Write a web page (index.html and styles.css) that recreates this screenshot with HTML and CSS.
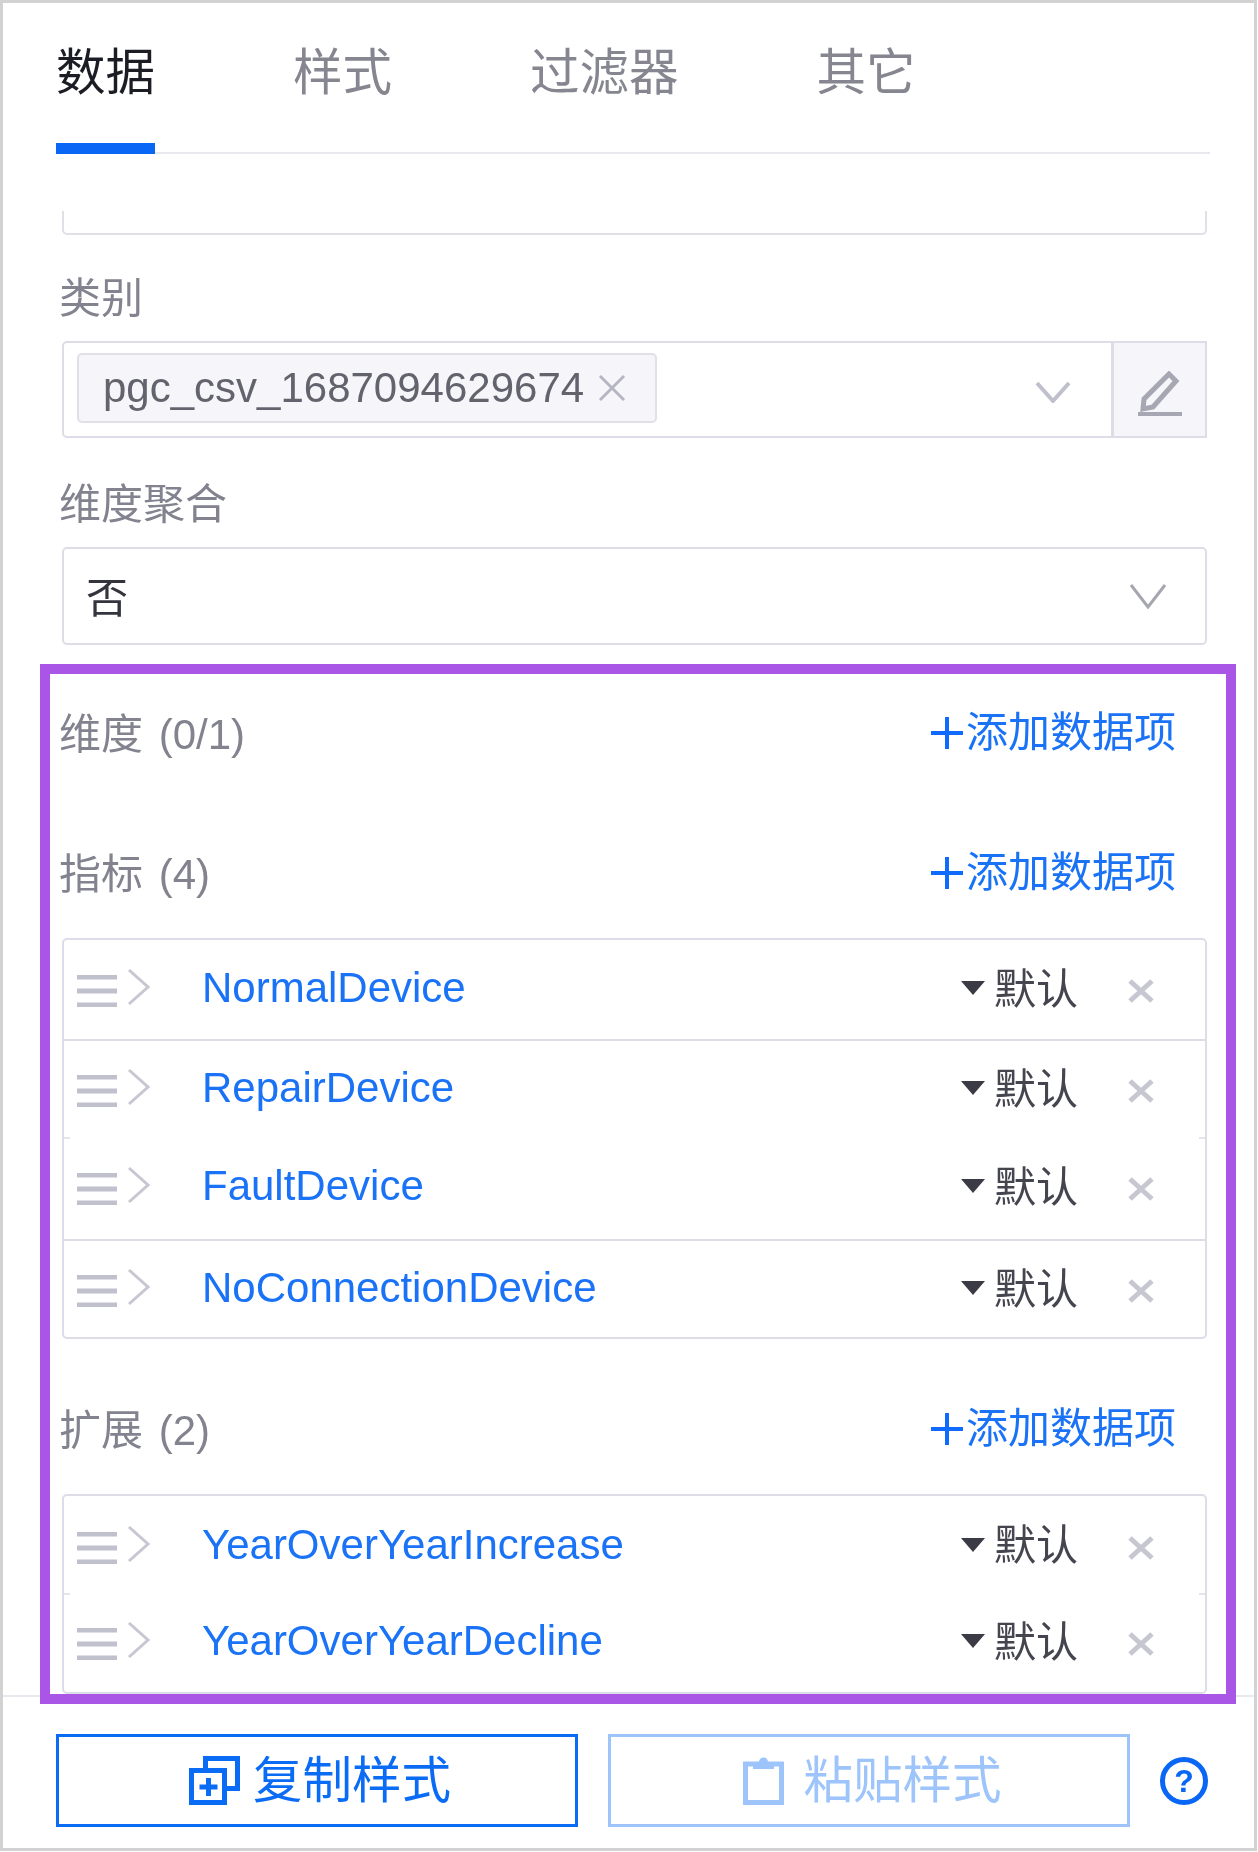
FILE: index.html
```html
<!DOCTYPE html>
<html lang="zh-CN">
<head>
<meta charset="utf-8">
<title>数据</title>
<link rel="stylesheet" href="styles.css">
</head>
<body>
<svg class="defs" aria-hidden="true">
  <symbol id="grip" viewBox="0 0 40 32"><path d="M0 2h40M0 16h40M0 30h40"/></symbol>
  <symbol id="right" viewBox="0 0 24 38"><path d="M2 2l19 17L2 36"/></symbol>
  <symbol id="x" viewBox="0 0 28 24"><path d="M3 2l22 20M25 2L3 22"/></symbol>
  <symbol id="plus" viewBox="0 0 32 34"><path d="M0 17h32M16 1v32"/></symbol>
</svg>
<main class="panel">
  <nav class="tabs">
    <span class="tab tab--active">数据</span>
    <span class="tab">样式</span>
    <span class="tab">过滤器</span>
    <span class="tab">其它</span>
  </nav>
  <div class="content">
    <div class="stub"></div>
    <div class="label label--first">类别</div>
    <div class="field-group">
      <div class="select select--tags">
        <span class="tag">pgc_csv_1687094629674<svg class="tag-x" viewBox="0 0 28 28"><path d="M2 2l24 24M26 2L2 26"/></svg></span>
        <svg class="chev chev--muted" viewBox="0 0 36 22"><path d="M2 2l16 18L34 2"/></svg>
      </div>
      <div class="addon">
        <svg class="pencil" viewBox="0 0 44 46"><path class="pencil-body" d="M31 3l7 7-23 26-10 2 1-10z"/><rect class="pencil-line" x="0" y="41" width="44" height="4"/></svg>
      </div>
    </div>
    <div class="label">维度聚合</div>
    <div class="select select--plain">
      <span class="value">否</span>
      <svg class="chev chev--big" viewBox="0 0 38 26"><path d="M2 2l17 22L36 2"/></svg>
    </div>

    <section class="fields">
      <div class="head head--dim">
        <span class="label-inline">维度 (0/1)</span>
        <a class="add"><svg class="add-plus"><use href="#plus"/></svg>添加数据项</a>
      </div>
      <div class="head">
        <span class="label-inline">指标 (4)</span>
        <a class="add"><svg class="add-plus"><use href="#plus"/></svg>添加数据项</a>
      </div>
      <div class="list">
        <div class="row row--first">
          <svg class="grip"><use href="#grip"/></svg><svg class="right"><use href="#right"/></svg>
          <span class="name">NormalDevice</span>
          <span class="caret"></span><span class="agg">默认</span><svg class="del"><use href="#x"/></svg>
        </div>
        <div class="row row--line">
          <svg class="grip"><use href="#grip"/></svg><svg class="right"><use href="#right"/></svg>
          <span class="name">RepairDevice</span>
          <span class="caret"></span><span class="agg">默认</span><svg class="del"><use href="#x"/></svg>
        </div>
        <div class="row row--seam row--tall">
          <svg class="grip"><use href="#grip"/></svg><svg class="right"><use href="#right"/></svg>
          <span class="name">FaultDevice</span>
          <span class="caret"></span><span class="agg">默认</span><svg class="del"><use href="#x"/></svg>
        </div>
        <div class="row row--line">
          <svg class="grip"><use href="#grip"/></svg><svg class="right"><use href="#right"/></svg>
          <span class="name">NoConnectionDevice</span>
          <span class="caret"></span><span class="agg">默认</span><svg class="del"><use href="#x"/></svg>
        </div>
      </div>
      <div class="head head--ext">
        <span class="label-inline">扩展 (2)</span>
        <a class="add"><svg class="add-plus"><use href="#plus"/></svg>添加数据项</a>
      </div>
      <div class="list">
        <div class="row row--short">
          <svg class="grip"><use href="#grip"/></svg><svg class="right"><use href="#right"/></svg>
          <span class="name">YearOverYearIncrease</span>
          <span class="caret"></span><span class="agg">默认</span><svg class="del"><use href="#x"/></svg>
        </div>
        <div class="row row--seam row--first">
          <svg class="grip"><use href="#grip"/></svg><svg class="right"><use href="#right"/></svg>
          <span class="name">YearOverYearDecline</span>
          <span class="caret"></span><span class="agg">默认</span><svg class="del"><use href="#x"/></svg>
        </div>
      </div>
    </section>
  </div>
  <footer class="footer">
    <button class="btn btn--copy" type="button">
      <svg class="btn-icon" viewBox="0 0 52 49"><path d="M16.5 12V2.500h32v30H38"/><rect x="2.500" y="14.500" width="33" height="32"/><path d="M10.500 31h18M19.500 22v18"/></svg>
      复制样式
    </button>
    <button class="btn btn--paste" type="button">
      <svg class="btn-icon btn-icon--paste" viewBox="0 0 42 49"><rect x="2.500" y="8" width="36" height="38.500"/><path class="clip" d="M10 13V6h6a4.500 4.500 0 0 1 9 0h6v7z"/></svg>
      粘贴样式
    </button>
    <span class="help">?</span>
  </footer>
</main>
</body>
</html>
```
FILE: styles.css
```css
* { box-sizing: border-box; }
html, body { margin: 0; padding: 0; background: #fff; }
body {
  font-family: "Liberation Sans", "Noto Sans CJK SC", sans-serif;
  font-size: 42px;
  line-height: 42px;
  color: #3a3b44;
}
.defs { position: absolute; width: 0; height: 0; }
svg { display: block; flex: none; fill: none; }

/* the reference is a slightly soft, upscaled capture */
.tab, .label, .label-inline, .value, .tag, .chev, .pencil, .add, .row > *, .btn > *, .help {
  filter: blur(0.5px);
}

.panel {
  width: 1257px;
  height: 1851px;
  border: 3px solid #d2d2d2;
  display: flex;
  flex-direction: column;
}

.tabs {
  height: 151px;
  margin: 0 44px 0 53px;
  display: flex;
  gap: 138px;
  border-bottom: 2px solid #e8e9ee;
}
.tab {
  height: 151px;
  padding-top: 45px;
  font-size: 49.5px;
  line-height: 49px;
  white-space: nowrap;
  color: #85868f;
}
.tab--active {
  color: #1c1d24;
  border-bottom: 11px solid #0a66f5;
}

.content {
  flex: 1;
  min-height: 0;
  padding: 0 47px 0 56px;
}
.stub {
  height: 24px;
  margin: 57px 0 0 3px;
  border: 2px solid #dfe0e8;
  border-top: 0;
  border-radius: 0 0 5px 5px;
}
.label {
  margin-top: 46px;
  margin-bottom: 21px;
  color: #82838f;
}
.label--first { margin-top: 43px; margin-bottom: 21px; }

.field-group { display: flex; margin-left: 3px; height: 97px; }
.select {
  display: flex;
  align-items: center;
  justify-content: space-between;
  border: 2px solid #dcdde6;
  border-radius: 5px;
}
.select--tags { flex: 1; padding: 0 40px 0 13px; border-radius: 5px 0 0 5px; }
.select--plain { height: 98px; margin-left: 3px; padding: 0 38px 0 22px; }
.value { color: #33343c; padding-top: 5px; }

.tag {
  display: flex;
  align-items: center;
  height: 70px;
  margin-bottom: 3px;
  padding: 0 29px 0 24px;
  background: #f5f5fa;
  border: 2px solid #e0e1e8;
  border-radius: 5px;
  color: #62636d;
}
.tag-x { width: 28px; height: 28px; margin-left: 14px; stroke: #b5b6c1; stroke-width: 3; filter: none; }
.chev { stroke-width: 3; }
.chev--muted { width: 36px; height: 22px; margin-top: 5px; stroke: #bfc0cb; stroke-width: 4; }
.chev--big { width: 38px; height: 26px; stroke: #a5a6b0; }

.addon {
  width: 94px;
  display: flex;
  align-items: center;
  justify-content: center;
  padding-top: 8px;
  background: #f5f5fa;
  border: 2px solid #dcdde6;
  border-left-width: 1px;
}
.pencil { width: 44px; height: 46px; }
.pencil-body { stroke: #a6a7b2; stroke-width: 5; }
.pencil-line { fill: #a6a7b2; }

.fields {
  position: relative;
  z-index: 1;
  height: 1040px;
  margin: 19px -29px 0 -19px;
  padding: 40px 19px 0 9px;
  border: 10px solid #a955e6;
  background: #fff;
  overflow: hidden;
}
.head {
  display: flex;
  justify-content: space-between;
  align-items: flex-start;
  height: 42px;
  margin-bottom: 42px;
}
.head--dim { margin-bottom: 98px; }
.head--ext { margin-top: 71px; }
.label-inline { color: #82838f; word-spacing: 4px; }
.add {
  display: flex;
  align-items: center;
  gap: 3px;
  margin: -2px 31px 0 0;
  color: #1a73f7;
}
.add-plus { width: 32px; height: 34px; stroke: #0f6bff; stroke-width: 4; }

.list {
  margin-left: 3px;
  border: 2px solid #dcdde6;
  border-radius: 5px;
}
.row {
  display: flex;
  align-items: center;
  height: 98px;
  padding: 4px 50px 0 13px;
}
.row--first { height: 99px; padding-top: 3px; }
.row--short { height: 97px; padding-top: 6px; }
.row--tall { height: 102px; padding-top: 2px; }
.row--line { border-top: 2px solid #dcdde6; }
.row--seam {
  background: linear-gradient(to right, #e4e5ec 6px, transparent 6px, transparent calc(100% - 6px), #e4e5ec calc(100% - 6px)) top / 100% 2px no-repeat;
}
.grip { width: 40px; height: 32px; stroke: #c0c1cc; stroke-width: 5; }
.right { width: 24px; height: 38px; margin: 0 0 8px 10px; stroke: #c6c7d1; stroke-width: 3; }
.name {
  flex: 1;
  margin: 0 0 6px 51px;
  color: #1a73f7;
}
.caret {
  width: 0;
  height: 0;
  margin: 0 9px 6px 0;
  border-style: solid;
  border-width: 14px 12px 0;
  border-color: #3a3b44 transparent transparent;
}
.agg { width: 85px; margin-bottom: 3px; color: #44454f; }
.del { width: 28px; height: 24px; margin-left: 48px; stroke: #c6c7d1; stroke-width: 5; }

.footer {
  height: 153px;
  border-top: 2px solid #e8e9ee;
  display: flex;
  align-items: flex-start;
  padding: 37px 0 0 53px;
}
.btn {
  display: flex;
  align-items: center;
  justify-content: center;
  width: 522px;
  height: 93px;
  margin: 0;
  padding: 0 0 0 6px;
  background: #fff;
  border: 3px solid;
  font: 49.5px/49px "Liberation Sans", "Noto Sans CJK SC", sans-serif;
}
.btn--copy { color: #0a6cf5; border-color: #0a6cf5; gap: 12px; }
.btn--paste { margin-left: 30px; color: #9dc4fb; border-color: #9dc4fb; gap: 19px; }
.btn-icon { width: 52px; height: 49px; stroke: currentColor; stroke-width: 5; }
.btn-icon--paste { width: 42px; }
.clip { fill: currentColor; stroke: none; }
.help {
  display: flex;
  align-items: center;
  justify-content: center;
  width: 48px;
  height: 48px;
  margin: 23px 0 0 30px;
  border: 5px solid #0a66f5;
  border-radius: 50%;
  font-size: 32px;
  font-weight: 700;
  color: #0a66f5;
}
```
